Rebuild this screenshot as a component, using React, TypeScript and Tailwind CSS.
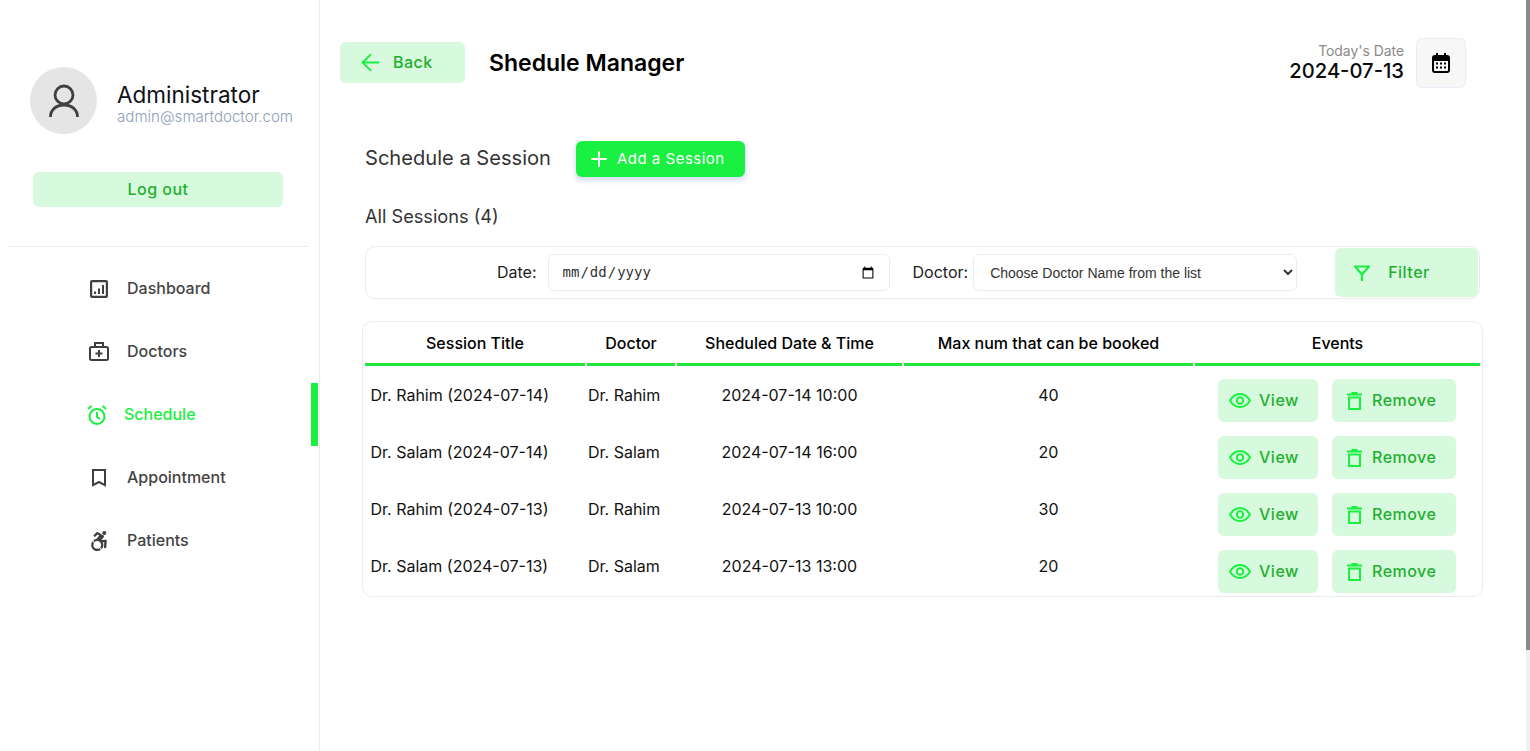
import React from "react";
import { ArrowLeft, Plus } from "lucide-react";
import { FaAccessibleIcon } from "react-icons/fa";

const Font = "font-['Inter',sans-serif]";

function UserIcon() {
  return (
    <svg width="30" height="34" viewBox="0 0 30 34" fill="none" stroke="#3f3f3f" strokeWidth="2.800">
      <circle cx="15" cy="11" r="9" />
      <path d="M1.500 33c0-7 5.500-12 13.500-12s13.500 5 13.500 12" />
    </svg>
  );
}
function DashIcon() {
  return (
    <svg width="18" height="18" viewBox="0 0 18 18" fill="none" stroke="#3f3f3f" strokeWidth="2.200">
      <rect x="1.100" y="1.100" width="15.800" height="15.800" rx="1" />
      <path d="M5 11.500v2.500M9 8.500v5.500M13 5v9" strokeWidth="2" />
    </svg>
  );
}
function CaseIcon() {
  return (
    <svg width="20" height="19" viewBox="0 0 20 19" fill="none" stroke="#3f3f3f" strokeWidth="2">
      <rect x="1" y="5" width="18" height="13" rx="1.500" />
      <path d="M6 5V1h8v4M10 8v7M6.500 11.500h7" />
    </svg>
  );
}
function AlarmIcon() {
  return (
    <svg width="20" height="20" viewBox="0 0 20 20" fill="none" stroke="#1af041" strokeWidth="2">
      <circle cx="10" cy="11.500" r="7.500" />
      <path d="M10 7v5l3 2M1 4 4.500 1M19 4 15.500 1" />
    </svg>
  );
}
function BookmarkIcon() {
  return (
    <svg width="14" height="18" viewBox="0 0 14 18" fill="none" stroke="#3f3f3f" strokeWidth="2">
      <path d="M1 1h12v15.200L7 13l-6 3.200z" />
    </svg>
  );
}
function EyeIcon() {
  return (
    <svg width="22" height="15" viewBox="0 0 22 15" fill="none" stroke="#1af041" strokeWidth="2">
      <path d="M1 7.500C3.500 3.200 7 1 11 1s7.500 2.200 10 6.500C18.500 11.800 15 14 11 14S3.500 11.800 1 7.500z" />
      <circle cx="11" cy="7.500" r="3.200" />
    </svg>
  );
}
function Trash() {
  return (
    <svg width="15" height="18" viewBox="0 0 15 18" fill="none" stroke="#1af041" strokeWidth="2">
      <path d="M0 2.500h15M4.500 1h6" />
      <rect x="2" y="5.500" width="11" height="11.500" />
    </svg>
  );
}
function CalIcon() {
  return (
    <svg width="18" height="20" viewBox="0 0 18 20" fill="none" stroke="#000" strokeWidth="2">
      <rect x="1" y="3" width="16" height="16" rx="2" />
      <path d="M1 6h16" strokeWidth="4" />
      <path d="M5 0v3M13 0v3" />
      <path d="M4 10.500h2M8 10.500h2M12 10.500h2M4 14.500h2M8 14.500h2M12 14.500h2" strokeWidth="2" />
    </svg>
  );
}
function FilterIcon() {
  return (
    <svg width="16" height="16" viewBox="0 0 16 16" fill="none" stroke="#1af041" strokeWidth="2.200">
      <path d="M1 1.500h14L8 9.500zM8 9v7" />
    </svg>
  );
}

const nav = [
  { label: "Dashboard", icon: <DashIcon /> },
  { label: "Doctors", icon: <CaseIcon /> },
  { label: "Schedule", icon: <AlarmIcon />, active: true },
  { label: "Appointment", icon: <BookmarkIcon /> },
  { label: "Patients", icon: <FaAccessibleIcon size={20} color="#3f3f3f" /> },
];

const rows = [
  ["Dr. Rahim (2024-07-14)", "Dr. Rahim", "2024-07-14 10:00", "40"],
  ["Dr. Salam (2024-07-14)", "Dr. Salam", "2024-07-14 16:00", "20"],
  ["Dr. Rahim (2024-07-13)", "Dr. Rahim", "2024-07-13 10:00", "30"],
  ["Dr. Salam (2024-07-13)", "Dr. Salam", "2024-07-13 13:00", "20"],
];

const heads = ["Session Title", "Doctor", "Sheduled Date & Time", "Max num that can be booked", "Events"];

export default function App() {
  return (
    <div className={`${Font} flex h-[751px] w-[1530px] overflow-hidden bg-white relative`}>
      <aside className="w-[320px] shrink-0 border-r border-[#ebebeb] pt-[67px]">
        <div className="flex items-center pl-[30px]">
          <div className="flex h-[67px] w-[67px] items-center justify-center rounded-full bg-[#e5e5e5]">
            <UserIcon />
          </div>
          <div className="ml-5 pt-[5px]">
            <div className="text-[22.500px] leading-[27px] text-[#10121a]">Administrator</div>
            <div className="text-[15.100px] leading-[17px] font-light text-[#8e9cb8]">admin@smartdoctor.com</div>
          </div>
        </div>
        <div className="ml-[33px] mt-[38px] flex h-[35px] w-[250px] items-center justify-center rounded-md bg-[#d7f9de] pb-[2px] text-[16px] font-medium tracking-[0.5px] text-[#1fb02f]">
          Log out
        </div>
        <div className="ml-2 mt-[39px] h-px w-[300px] bg-[#ebebeb]" />
        <nav className="mt-[10px]">
          {nav.map((n) => (
            <div key={n.label} className={`flex h-[63px] items-center ${n.active ? "mr-px border-r-[7px] border-[#1af041]" : ""}`}>
              <div className={`flex justify-center ${n.active ? "ml-[87px] w-[20px]" : "ml-[89px] w-[20px]"}`}>{n.icon}</div>
              <span className={`pb-[2px] text-[16px] font-medium ${n.active ? "ml-[17px] text-[#1af041]" : "ml-[18px] text-[#444]"}`}>{n.label}</span>
            </div>
          ))}
        </nav>
      </aside>
      <main className="relative flex-1">
        <header className="mt-[38px] flex h-[50px] items-start pl-5 pr-16 pt-0">
          <div className="mt-1 flex h-[41px] w-[125px] items-center rounded-md bg-[#d7f9de] pl-[17px] text-[#1fb02f]">
            <ArrowLeft size={27} color="#1af041" strokeWidth={1.700} />
            <span className="ml-[9px] pb-[2px] text-[16px] font-medium tracking-[0.5px]">Back</span>
          </div>
          <h1 className="ml-6 mt-[9px] text-[23px] leading-[32px] font-semibold text-black">Shedule Manager</h1>
          <div className="ml-auto flex items-start">
            <div className="mt-[5px] text-right">
              <div className="text-[13.900px] leading-[17px] text-[#8a8a8a]">Today's Date</div>
              <div className="text-[20.200px] leading-[22px] font-medium text-[#0a0a0a]">2024-07-13</div>
            </div>
            <div className="ml-3 flex h-[50px] w-[50px] items-center justify-center rounded-md border border-[#e9edf7] bg-[#f7f7f8]">
              <CalIcon />
            </div>
          </div>
        </header>
        <section className="ml-[45px] mt-[53px] flex items-center">
          <span className="pb-[2px] text-[20.100px] leading-[24px] text-[#333]">Schedule a Session</span>
          <div className="ml-[25px] flex h-9 w-[169px] items-center rounded-md bg-[#1af041] pl-[11px] text-[15px] tracking-[0.5px] text-white shadow-[0_3px_5px_1px_rgba(90,132,220,0.25)]">
            <Plus size={24} color="#fff" strokeWidth={2} />
            <span className="ml-[6px]">Add a Session</span>
          </div>
        </section>
        <div className="ml-[45px] mt-[27px] text-[18.200px] leading-[24px] text-[#333]">All Sessions (4)</div>
        <div className="ml-[45px] mt-[18px] flex h-[53px] w-[1115px] items-center rounded-[10px] border border-[#ebebeb]">
          <span className="ml-[131px] pb-[2px] text-[16px] text-[#222]">Date:</span>
          <input
            type="date"
            className="ml-[11px] h-[37px] w-[342px] rounded-md border border-[#ebebeb] pl-[13px] pr-3 font-['DejaVu_Sans_Mono',monospace] text-[14px] text-[#333]"
          />
          <span className="ml-[23px] pb-[2px] text-[16px] text-[#222]">Doctor:</span>
          <select className="ml-[5px] h-[37px] w-[324px] rounded-md border border-[#ebebeb] bg-white px-3 font-['Liberation_Sans',sans-serif] text-[14px] text-[#333]">
            <option>Choose Doctor Name from the list</option>
          </select>
          <div className="ml-[38px] flex h-[49px] w-[143px] items-center rounded-md bg-[#d7f9de] pl-[19px] text-[#1fb02f]">
            <FilterIcon />
            <span className="ml-[18px] pb-[2px] text-[16px] font-medium tracking-[0.5px]">Filter</span>
          </div>
        </div>
        <div className="ml-[42px] mt-[22px] w-[1121px] rounded-[10px] border border-[#ebebeb] pb-[2px]">
          <table className="w-[1119px] table-fixed border-separate border-spacing-x-[2px] border-spacing-y-0">
            <colgroup>
              <col className="w-[220px]" />
              <col className="w-[88px]" />
              <col className="w-[225px]" />
              <col className="w-[289px]" />
              <col className="w-[285px]" />
            </colgroup>
            <thead>
              <tr>
                {heads.map((h) => (
                  <th key={h} className="h-[44px] border-b-[3px] border-[#1fe63f] text-[16px] font-medium text-black">{h}</th>
                ))}
              </tr>
            </thead>
            <tbody>
              {rows.map((r) => (
                <tr key={r[0]} className="h-[57px] text-[16px] text-[#111]">
                  <td className="pl-[5.500px]">{r[0]}</td>
                  <td className="pl-px">{r[1]}</td>
                  <td className="text-center">{r[2]}</td>
                  <td className="text-center">{r[3]}</td>
                  <td className="pl-[23px] pt-[13px] pb-px">
                    <div className="flex gap-[14px] text-[16px] font-medium tracking-[0.5px] text-[#1fb02f]">
                      <div className="flex h-[43px] w-[100px] items-center rounded-md bg-[#d7f9de] pl-[11px]">
                        <EyeIcon />
                        <span className="ml-[8px] pb-[2px]">View</span>
                      </div>
                      <div className="flex h-[43px] w-[124px] items-center rounded-md bg-[#d7f9de] pl-[15px]">
                        <Trash />
                        <span className="ml-[10px] pb-[2px]">Remove</span>
                      </div>
                    </div>
                  </td>
                </tr>
              ))}
            </tbody>
          </table>
        </div>
      </main>
      <div className="absolute right-0 top-0 h-full w-1 bg-[#f0f0f0]">
        <div className="h-[650px] w-full bg-[#8a8a8a]" />
      </div>
    </div>
  );
}
